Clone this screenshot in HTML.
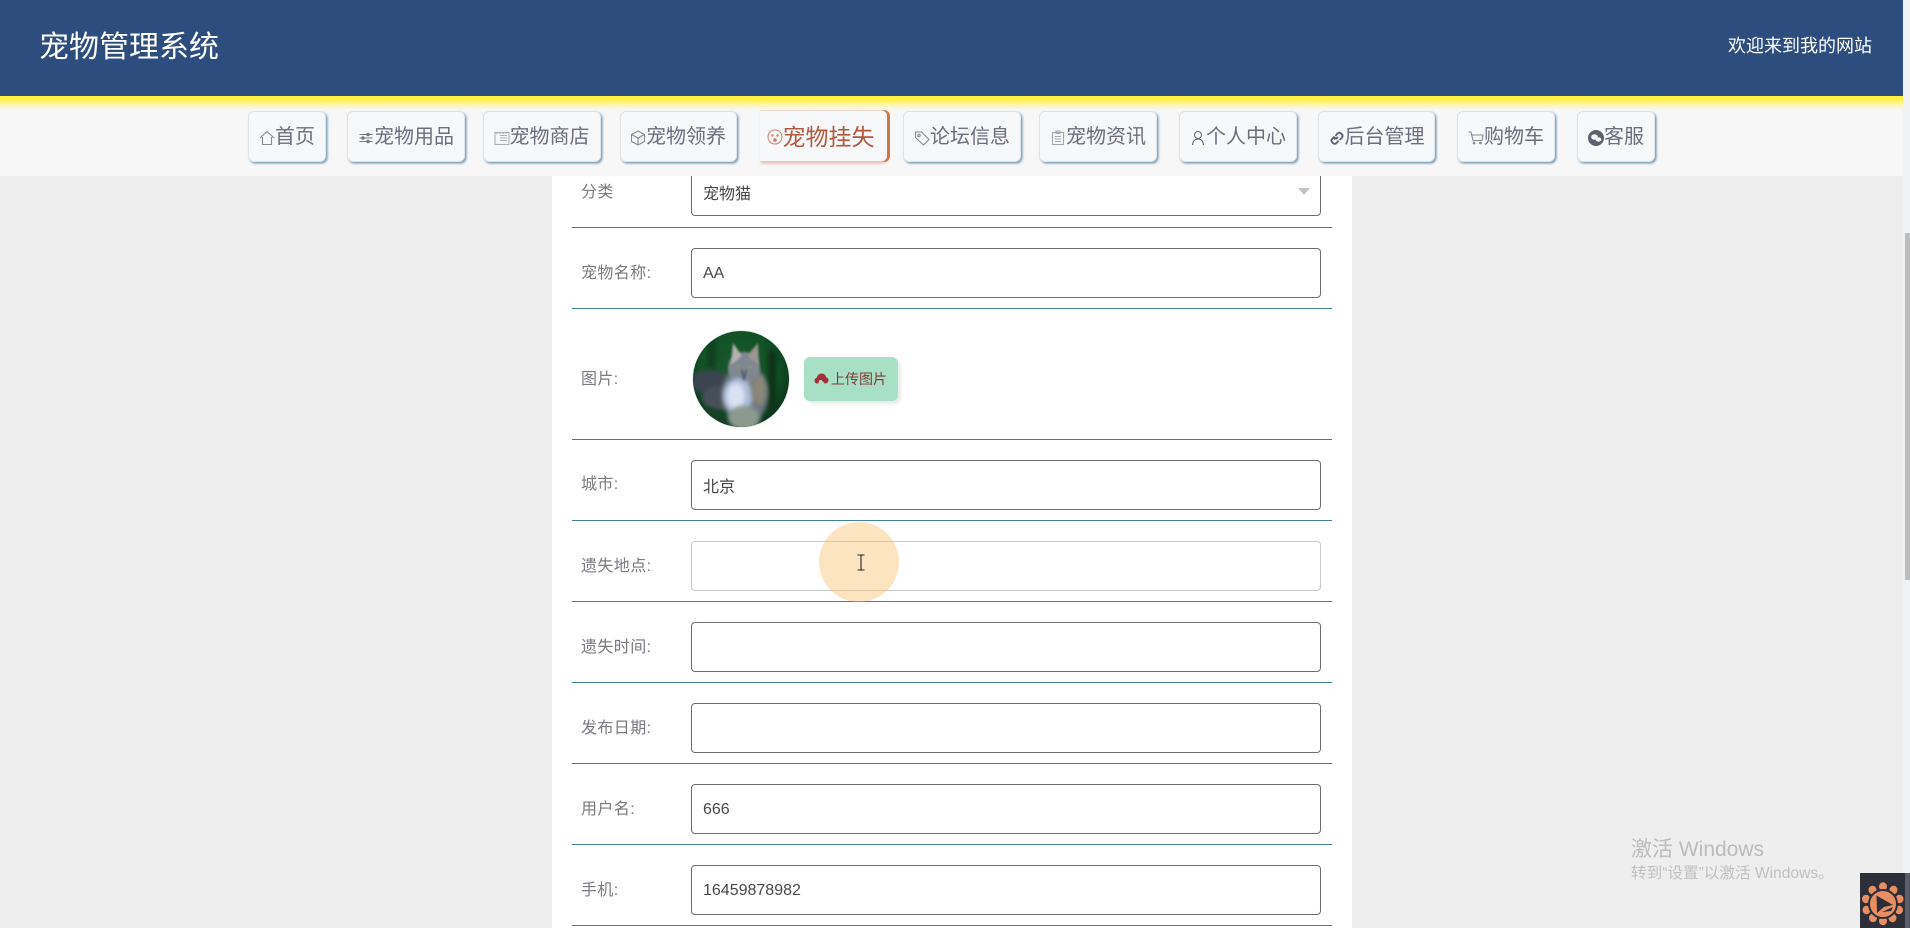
<!DOCTYPE html>
<html lang="zh-CN">
<head>
<meta charset="utf-8">
<title>宠物管理系统</title>
<style>
*{box-sizing:border-box}
html,body{margin:0;padding:0;width:1910px;height:928px;overflow:hidden;background:#eeeeee;font-family:"Liberation Sans","Noto Sans CJK SC",sans-serif}
.abs{position:absolute}
#panel{position:absolute;left:552px;top:176px;width:800px;height:752px;background:#fff}
.line{position:absolute;left:572px;width:760px;height:1.4px;background:#3f8196}
.lbl{position:absolute;left:581px;font-size:16px;letter-spacing:.4px;line-height:20px;color:#7a7a80;white-space:nowrap}
.inp{position:absolute;left:691px;width:630px;height:50px;border:1px solid #6c6c74;border-radius:4px;background:#fff;font-size:16px;line-height:49px;color:#484848;padding-left:11px;white-space:nowrap}
.inp span{position:relative;top:2px}
#header{position:absolute;left:0;top:0;width:1903px;height:96px;background:#2d4d7f}
#glow{position:absolute;left:0;top:96px;width:1903px;height:14px;background:linear-gradient(#fff03c 0,#fff24e 30%,#fff590 52%,#fbf6c4 72%,rgba(247,247,247,0) 100%)}
#nav{position:absolute;left:0;top:96px;width:1903px;height:80px;background:#f7f7f8}
.btn{position:absolute;top:111px;height:51px;background:#f7f8fa;border:1px solid #dfe3e6;border-radius:6px;box-shadow:1.5px 1.5px 2px rgba(60,115,155,.7);color:#6e6e7e;font-size:20px;line-height:49px;padding-top:2px;white-space:nowrap;display:flex;align-items:center;justify-content:center}
.btn svg{flex:none;width:16px;height:16px;fill:none;stroke:#8a8a92;stroke-width:1.1}
.btn.on{top:110px;height:52px;color:#b4583f;font-size:23px;padding-right:6px;border:none;border-radius:0 6px 6px 0;border-bottom:1px solid #ecc6b0;border-top:1px solid #f3d8c8;box-shadow:3px 0 0 #cc7a45,1px 2px 2px rgba(210,130,80,.4)}
#scroll{position:absolute;left:1903px;top:0;width:7px;height:928px;background:#f1f2f4}
#thumb{position:absolute;left:1905px;top:233px;width:5px;height:347px;background:#bdbdbd}
</style>
</head>
<body>
<div id="panel"></div>

<div class="lbl" style="top:183px">分类</div>
<div class="inp" style="top:166px;line-height:56px">宠物猫</div>
<div class="abs" style="left:1298px;top:188px;width:0;height:0;border-left:6.5px solid transparent;border-right:6.5px solid transparent;border-top:7px solid #c4c4c4"></div>
<div class="line" style="top:227px"></div>

<div class="lbl" style="top:264px">宠物名称:</div>
<div class="inp" style="top:248px">AA</div>
<div class="line" style="top:308px"></div>

<div class="lbl" style="top:370px">图片:</div>
<svg class="abs" style="left:692px;top:330px" width="98" height="98" viewBox="0 0 98 98">
<defs>
<clipPath id="c"><circle cx="49" cy="49" r="48"/></clipPath>
<filter id="b1" x="-40%" y="-40%" width="180%" height="180%"><feGaussianBlur stdDeviation="2.2"/></filter>
<filter id="b2" x="-40%" y="-40%" width="180%" height="180%"><feGaussianBlur stdDeviation="1"/></filter>
<radialGradient id="bg" cx="48%" cy="42%" r="62%"><stop offset="0" stop-color="#1c5a2c"/><stop offset=".65" stop-color="#125026"/><stop offset="1" stop-color="#08281a"/></radialGradient>
</defs>
<circle cx="49" cy="49" r="49" fill="#e8f2ec"/>
<g clip-path="url(#c)">
<rect width="98" height="98" fill="url(#bg)"/>
<rect x="76" y="20" width="8" height="60" fill="#0a3218" filter="url(#b1)"/>
<rect x="16" y="5" width="7" height="34" fill="#0c3f1f" filter="url(#b1)"/>
<ellipse cx="18" cy="52" rx="19" ry="12" fill="#3a454f" filter="url(#b1)"/>
<ellipse cx="26" cy="68" rx="16" ry="12" fill="#4a4f58" filter="url(#b1)"/>
<ellipse cx="14" cy="92" rx="20" ry="14" fill="#163f26" filter="url(#b1)"/>
<ellipse cx="53" cy="64" rx="23" ry="30" fill="#6e7783" filter="url(#b1)"/>
<ellipse cx="52" cy="38" rx="16" ry="16" fill="#7e8792" filter="url(#b2)"/>
<path d="M39 35 L41 13 L50 26Z" fill="#b4b2b0" filter="url(#b2)"/>
<path d="M55 26 L66 13 L67 35Z" fill="#9c9692" filter="url(#b2)"/>
<ellipse cx="46" cy="66" rx="15" ry="18" fill="#a9bbd6" filter="url(#b1)"/>
<ellipse cx="44" cy="66" rx="9" ry="13" fill="#d8e2f2" filter="url(#b1)"/>
<ellipse cx="67" cy="60" rx="7" ry="15" fill="#8a8678" filter="url(#b1)"/>
<ellipse cx="52" cy="88" rx="16" ry="12" fill="#8b9a8e" filter="url(#b1)"/>
<ellipse cx="46" cy="37" rx="2.2" ry="1.5" fill="#8f9a60" filter="url(#b2)"/>
<ellipse cx="58" cy="37" rx="2.2" ry="1.5" fill="#8f9a60" filter="url(#b2)"/>
<path d="M50 40 L52 50 L54 40" fill="none" stroke="#4a525c" stroke-width="1.5" filter="url(#b2)"/>
</g>
</svg>
<div class="abs" style="left:804px;top:357px;width:94px;height:44px;background:#a8e0c5;border-radius:6px;box-shadow:3px 3px 3px rgba(180,190,185,.3);color:#7f3b3b;font-size:14px;line-height:45px;padding-left:27px;white-space:nowrap">上传图片</div>
<svg class="abs" style="left:814px;top:372px" width="15" height="13" viewBox="0 0 15 13"><path d="M3.5 11.5C1.4 11.5 0.3 9.9 0.5 8.2 0.7 6.8 1.6 6 2.8 5.8 3.2 3.3 5.2 1.5 7.6 1.5c2.4 0 4.3 1.7 4.7 4 1.4.2 2.3 1.4 2.2 2.8-.1 1.7-1.3 3.2-3 3.2h-.8L7.5 8 5.5 8 4.3 11.5Z" fill="#a3303a"/></svg>
<div class="line" style="top:439px"></div>

<div class="lbl" style="top:475px">城市:</div>
<div class="inp" style="top:460px"><span>北京</span></div>
<div class="line" style="top:520px"></div>

<div class="lbl" style="top:557px">遗失地点:</div>
<div class="inp" style="top:541px;border-color:#c8c8c8"></div>
<div class="line" style="top:601px"></div>

<div class="lbl" style="top:638px">遗失时间:</div>
<div class="inp" style="top:622px"></div>
<div class="line" style="top:682px"></div>

<div class="lbl" style="top:719px">发布日期:</div>
<div class="inp" style="top:703px"></div>
<div class="line" style="top:763px"></div>

<div class="lbl" style="top:800px">用户名:</div>
<div class="inp" style="top:784px;line-height:50px">666</div>
<div class="line" style="top:844px"></div>

<div class="lbl" style="top:881px">手机:</div>
<div class="inp" style="top:865px;line-height:50px">16459878982</div>
<div class="line" style="top:925px"></div>

<div class="abs" style="left:819px;top:522px;width:80px;height:80px;border-radius:50%;background:rgba(248,190,105,.42)"></div>
<svg class="abs" style="left:856px;top:554px" width="10" height="17" viewBox="0 0 10 17"><path d="M1.5 1H8.5M5 1V16M1.5 16H8.5" stroke="#222" stroke-width="1.1" fill="none"/></svg>

<div id="nav"></div>
<div id="header"></div>
<div id="glow"></div>
<div class="abs" style="left:39px;top:26px;color:#fff;font-size:30px;line-height:44px;white-space:nowrap">宠物管理系统</div>
<div class="abs" style="left:1728px;top:33px;color:#fff;font-size:18px;line-height:26px;white-space:nowrap">欢迎来到我的网站</div>

<div class="btn" style="left:248px;width:78px"><svg viewBox="0 0 16 16"><path d="M1 8 8 1.5 15 8M3.5 7V14.5H12.5V7"/></svg>首页</div>
<div class="btn" style="left:347px;width:118px"><svg viewBox="0 0 16 16" style="stroke:#76767e"><path d="M1.5 4.5H14.5M1.5 8H14.5M1.5 11.5H14.5"/><circle cx="10" cy="4.5" r="1.2" fill="#76767e"/><circle cx="5" cy="8" r="1.2" fill="#76767e"/><circle cx="10" cy="11.5" r="1.2" fill="#76767e"/></svg>宠物用品</div>
<div class="btn" style="left:483px;width:118px;padding-right:1px"><svg viewBox="0 0 16 16" style="stroke:#b0b0b4"><rect x="1" y="2.5" width="14" height="12"/><path d="M6 5.5H13M6 8H13M6 10.5H13M3 2V4M6 2V4M9 2V4M12 2V4" /></svg>宠物商店</div>
<div class="btn" style="left:620px;width:117px;padding-right:1px"><svg viewBox="0 0 16 16"><path d="M8 1 14.5 4.5V11.5L8 15 1.5 11.5V4.5ZM1.5 4.5 8 8 14.5 4.5M8 8V15"/></svg>宠物领养</div>
<div class="btn on" style="left:760px;width:127px"><svg viewBox="0 0 16 16" style="stroke:#d08a78"><circle cx="8" cy="8" r="7"/><circle cx="5.5" cy="6.5" r=".7" fill="#c05040"/><circle cx="10.5" cy="6.5" r=".7" fill="#c05040"/><circle cx="8" cy="11" r="1.3" fill="#c05040"/></svg>宠物挂失</div>
<div class="btn" style="left:903px;width:118px"><svg viewBox="0 0 16 16"><path d="M1.5 2H7.5L15 9.5 9.5 15 1.5 7.5Z"/><circle cx="5" cy="5.5" r="1.2"/></svg>论坛信息</div>
<div class="btn" style="left:1039px;width:118px"><svg viewBox="0 0 16 16" style="stroke:#a8a8ac"><rect x="2.5" y="2.5" width="11" height="12"/><rect x="6" y="1" width="4" height="2.5"/><path d="M5 6.5H11M5 9H11M5 11.5H11"/></svg>宠物资讯</div>
<div class="btn" style="left:1179px;width:118px"><svg viewBox="0 0 16 16" style="stroke:#66666e"><circle cx="8" cy="5" r="3.5"/><path d="M2.5 15C3 10.5 5 9 8 9s5 1.5 5.5 6"/></svg>个人中心</div>
<div class="btn" style="left:1318px;width:117px"><svg viewBox="0 0 16 16" style="stroke:#5f5f70;stroke-width:1.8"><path d="M7 7.5 5 9.5M6.5 6 8.5 3.5a2.3 2.3 0 0 1 3.5 0l1 1a2.3 2.3 0 0 1 0 3L10.5 10M5.5 6.5 3 9a2.3 2.3 0 0 0 0 3l1 1a2.3 2.3 0 0 0 3.5 0L9.5 10.5M9 7 7 9"/></svg>后台管理</div>
<div class="btn" style="left:1457px;width:98px"><svg viewBox="0 0 16 16"><path d="M.5 2H3L5 10.5H14L15 5H4"/><circle cx="6" cy="13" r=".8" fill="#777"/><circle cx="12.5" cy="13" r=".8" fill="#777"/></svg>购物车</div>
<div class="btn" style="left:1577px;width:78px"><svg viewBox="0 0 16 16" style="stroke:none"><circle cx="8" cy="8" r="8" fill="#5f5f72"/><ellipse cx="6.5" cy="7" rx="3.4" ry="2.8" fill="#f7f8fa"/><ellipse cx="10.5" cy="9.5" rx="2.8" ry="2.2" fill="#f7f8fa"/></svg>客服</div>

<div class="abs" style="left:1631px;top:836px;font-size:21px;line-height:28px;color:#bcbcbc;white-space:nowrap">激活 Windows</div>
<div class="abs" style="left:1631px;top:864px;font-size:15.6px;line-height:20px;color:#c0c0c0;white-space:nowrap">转到“设置”以激活 Windows。</div>

<div id="scroll"></div>
<div id="thumb"></div>
<div class="abs" style="left:1905px;top:873px;width:5px;height:55px;background:#5b5d68"></div>
<div class="abs" style="left:1860px;top:873px;width:45px;height:55px;background:#2c2f38"></div>
<svg class="abs" style="left:1860px;top:880px" width="45" height="48" viewBox="0 0 45 48">
<g fill="#e98d63">
<ellipse cx="23" cy="6.5" rx="4" ry="4.2"/>
<ellipse cx="33.5" cy="10" rx="4" ry="4.2"/>
<ellipse cx="39.5" cy="19" rx="4" ry="4.2"/>
<ellipse cx="39" cy="30" rx="4" ry="4.2"/>
<ellipse cx="32.5" cy="38" rx="4" ry="4.2"/>
<ellipse cx="23" cy="41" rx="4" ry="4.2"/>
<ellipse cx="13" cy="38" rx="4" ry="4.2"/>
<ellipse cx="6.5" cy="30" rx="4" ry="4.2"/>
<ellipse cx="6" cy="19" rx="4" ry="4.2"/>
<ellipse cx="12.5" cy="10" rx="4" ry="4.2"/>
</g>
<circle cx="23" cy="24" r="14" fill="#e98d63" stroke="#2c2f38" stroke-width="2"/>
<path d="M16.5 15.5 33 25 24 27 17 33Z" fill="#2c2f38"/>
<path d="M22 32 33 27 31 31Z" fill="#2c2f38"/>
</svg>
</body>
</html>
